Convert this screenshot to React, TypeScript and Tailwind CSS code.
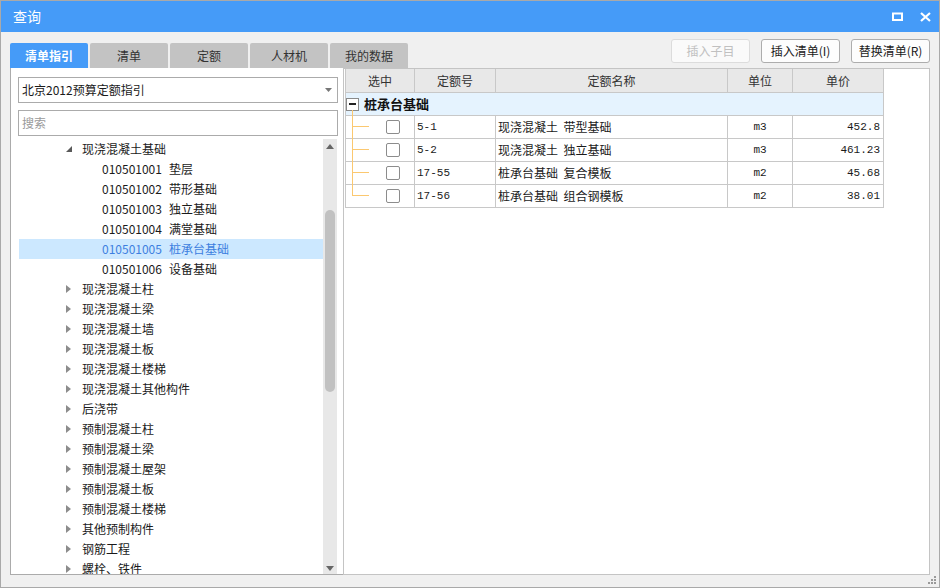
import React from "react";

const FONT = "font-['Noto_Sans_CJK_SC','Noto_Sans',sans-serif]";
const MONO = "font-['Liberation_Mono',monospace]";

type Item = { kind: "l1"; text: string; expanded?: boolean } | { kind: "l2"; code: string; text: string; selected?: boolean };

const items: Item[] = [
  { kind: "l1", text: "现浇混凝土基础", expanded: true },
  { kind: "l2", code: "010501001", text: "垫层" },
  { kind: "l2", code: "010501002", text: "带形基础" },
  { kind: "l2", code: "010501003", text: "独立基础" },
  { kind: "l2", code: "010501004", text: "满堂基础" },
  { kind: "l2", code: "010501005", text: "桩承台基础", selected: true },
  { kind: "l2", code: "010501006", text: "设备基础" },
  { kind: "l1", text: "现浇混凝土柱" },
  { kind: "l1", text: "现浇混凝土梁" },
  { kind: "l1", text: "现浇混凝土墙" },
  { kind: "l1", text: "现浇混凝土板" },
  { kind: "l1", text: "现浇混凝土楼梯" },
  { kind: "l1", text: "现浇混凝土其他构件" },
  { kind: "l1", text: "后浇带" },
  { kind: "l1", text: "预制混凝土柱" },
  { kind: "l1", text: "预制混凝土梁" },
  { kind: "l1", text: "预制混凝土屋架" },
  { kind: "l1", text: "预制混凝土板" },
  { kind: "l1", text: "预制混凝土楼梯" },
  { kind: "l1", text: "其他预制构件" },
  { kind: "l1", text: "钢筋工程" },
  { kind: "l1", text: "螺栓、铁件" },
];

const rows = [
  { no: "5-1", name: "现浇混凝土  带型基础", unit: "m3", price: "452.8" },
  { no: "5-2", name: "现浇混凝土  独立基础", unit: "m3", price: "461.23" },
  { no: "17-55", name: "桩承台基础  复合模板", unit: "m2", price: "45.68" },
  { no: "17-56", name: "桩承台基础  组合钢模板", unit: "m2", price: "38.01" },
];

function TreeRow({ item }: { item: Item }) {
  if (item.kind === "l1") {
    return (
      <div className="h-[20px] flex items-center pl-[47px] text-[12px] text-[#1a1a1a]">
        <span className="w-[16px] flex items-center">
          {item.expanded ? (
            <svg width="6" height="6" viewBox="0 0 6 6">
              <polygon points="6,0 6,6 0,6" fill="#595959" />
            </svg>
          ) : (
            <svg width="5" height="8" viewBox="0 0 5 8">
              <polygon points="0,0 5,4 0,8" fill="#8c8c8c" />
            </svg>
          )}
        </span>
        <span className="whitespace-nowrap">{item.text}</span>
      </div>
    );
  }
  return (
    <div
      className={`h-[20px] flex items-center pl-[83px] text-[12px] whitespace-nowrap ${
        item.selected ? "bg-[#cce8ff] text-[#3d7fe0]" : "text-[#1a1a1a]"
      }`}
    >
      <span>{item.code}</span>
      <span className="ml-[7px]">{item.text}</span>
    </div>
  );
}

export default function App() {
  return (
    <div className={`w-[940px] h-[588px] bg-[#f0f0f0] border border-[#a9a9a9] flex flex-col relative ${FONT}`}>
      {/* Title bar */}
      <div className="h-[31px] bg-[#459bf8] flex items-center pl-[12px] pr-[8px] text-white">
        <span className="text-[14px]">查询</span>
        <div className="ml-auto flex items-center gap-[17px]">
          <svg width="11" height="9" viewBox="0 0 11 9">
            <rect x="1" y="1.5" width="9" height="6.5" fill="none" stroke="white" strokeWidth="2" />
          </svg>
          <svg width="11" height="10" viewBox="0 0 11 10">
            <path d="M1 1 L10 9 M10 1 L1 9" stroke="white" strokeWidth="2.2" />
          </svg>
        </div>
      </div>

      {/* Tabs & buttons */}
      <div className="h-[36px] flex px-[9px]">
        <div className="self-end flex gap-[2px]">
          <div className="w-[78px] h-[25px] rounded-t-[2px] bg-[#459bf8] text-white text-[12px] font-bold flex items-center justify-center">
            清单指引
          </div>
          {["清单", "定额", "人材机", "我的数据"].map((t) => (
            <div
              key={t}
              className="w-[78px] h-[25px] rounded-t-[2px] bg-[#c3c3c3] text-[#333] text-[12px] flex items-center justify-center"
            >
              {t}
            </div>
          ))}
        </div>
        <div className="ml-auto mt-[7px] flex gap-[11px]">
          <div className="w-[79px] h-[24px] rounded-[3px] border border-[#dcdcdc] bg-[#fafafa] text-[#c0c0c0] text-[12px] flex items-center justify-center">
            插入子目
          </div>
          <div className="w-[79px] h-[24px] rounded-[3px] border border-[#adadad] bg-[#fdfdfd] text-[#1a1a1a] text-[12px] flex items-center justify-center">
            插入清单(I)
          </div>
          <div className="w-[79px] h-[24px] rounded-[3px] border border-[#adadad] bg-[#fdfdfd] text-[#1a1a1a] text-[12px] flex items-center justify-center">
            替换清单(R)
          </div>
        </div>
      </div>

      {/* Content */}
      <div className="h-[507px] mx-[9px] flex">
        {/* Left panel */}
        <div className="w-[333px] h-full bg-white border-l border-b border-[#ababab] flex flex-col">
          <div className="ml-[7px] mt-[9px] w-[320px] h-[26px] border border-[#ababab] flex items-center pl-[3px] pr-[5px] text-[12px] text-[#1a1a1a]">
            <span>北京2012预算定额指引</span>
            <svg className="ml-auto" width="7" height="4" viewBox="0 0 7 4">
              <polygon points="0,0 7,0 3.5,4" fill="#777" />
            </svg>
          </div>
          <div className="ml-[7px] mt-[7px] w-[320px] h-[26px] border border-[#ababab] flex items-center pl-[3px] text-[12px] text-[#9a9a9a]">
            搜索
          </div>
          <div className="ml-[8px] mt-[3px] w-[318px] flex-1 flex overflow-hidden">
            <div className="w-[304px] h-full overflow-hidden">
              {items.map((it, i) => (
                <TreeRow key={i} item={it} />
              ))}
            </div>
            <div className="w-[14px] h-full bg-[#e8e8e8] flex flex-col items-center">
              <svg className="mt-[5px]" width="8" height="5" viewBox="0 0 8 5">
                <polygon points="4,0 8,5 0,5" fill="#666" />
              </svg>
              <div className="mt-[61px] w-[10px] h-[182px] rounded-full bg-[#c1c1c1]" />
              <svg className="mt-auto mb-[3px]" width="8" height="5" viewBox="0 0 8 5">
                <polygon points="0,0 8,0 4,5" fill="#666" />
              </svg>
            </div>
          </div>
        </div>

        {/* Right panel */}
        <div className="flex-1 h-full bg-white border border-[#c4c4c4]">
          <div className="ml-[1px] w-[539px] border-l border-[#c8c8c8] relative text-[12px] text-[#1a1a1a]">
            {/* header */}
            <div className="h-[24px] flex bg-[#e8e8e8] border-b border-[#c8c8c8] text-[#333]">
              <div className="w-[69px] border-r border-[#c8c8c8] flex items-center justify-center">选中</div>
              <div className="w-[81px] border-r border-[#c8c8c8] flex items-center justify-center">定额号</div>
              <div className="w-[232px] border-r border-[#c8c8c8] flex items-center justify-center">定额名称</div>
              <div className="w-[65px] border-r border-[#c8c8c8] flex items-center justify-center">单位</div>
              <div className="w-[91px] border-r border-[#c8c8c8] flex items-center justify-center">单价</div>
            </div>
            {/* group */}
            <div className="h-[23px] flex items-center bg-[#e5f3fe] border-b border-r border-[#c8c8c8]">
              <div className="w-[13px] h-[13px] border border-[#8a8a8a] bg-white flex items-center justify-center">
                <div className="w-[7px] h-[1.5px] bg-[#222]" />
              </div>
              <span className="ml-[5px] text-[13px] font-bold text-[#111]">桩承台基础</span>
            </div>
            {/* rows */}
            {rows.map((r, i) => (
              <div key={i} className="h-[23px] flex border-b border-[#c8c8c8]">
                <div className="w-[69px] border-r border-[#c8c8c8] relative flex items-center">
                  <div className="absolute left-[6px] top-[10px] w-[17px] h-[1px] bg-[#fbc870]" />
                  <div className="ml-[40px] w-[14px] h-[14px] rounded-[2px] border border-[#8c8c8c] bg-white" />
                </div>
                <div className={`w-[81px] border-r border-[#c8c8c8] flex items-center pl-[2px] text-[11px] ${MONO}`}>{r.no}</div>
                <div className="w-[232px] border-r border-[#c8c8c8] flex items-center pl-[2px] whitespace-pre">{r.name}</div>
                <div className={`w-[65px] border-r border-[#c8c8c8] flex items-center justify-center text-[11px] ${MONO}`}>{r.unit}</div>
                <div className={`w-[91px] border-r border-[#c8c8c8] flex items-center justify-end pr-[3px] text-[11px] ${MONO}`}>{r.price}</div>
              </div>
            ))}
            {/* vertical connector */}
            <div className="absolute left-[6px] top-[41px] w-[1px] h-[86px] bg-[#fbc870]" />
          </div>
        </div>
      </div>

      {/* resize grip */}
      <svg className="absolute right-[2px] bottom-[2px]" width="9" height="9" viewBox="0 0 9 9">
        <rect x="6" y="0" width="2" height="2" fill="#9a9a9a" />
        <rect x="3" y="3" width="2" height="2" fill="#9a9a9a" />
        <rect x="6" y="3" width="2" height="2" fill="#9a9a9a" />
        <rect x="0" y="6" width="2" height="2" fill="#9a9a9a" />
        <rect x="3" y="6" width="2" height="2" fill="#9a9a9a" />
        <rect x="6" y="6" width="2" height="2" fill="#9a9a9a" />
      </svg>
    </div>
  );
}
